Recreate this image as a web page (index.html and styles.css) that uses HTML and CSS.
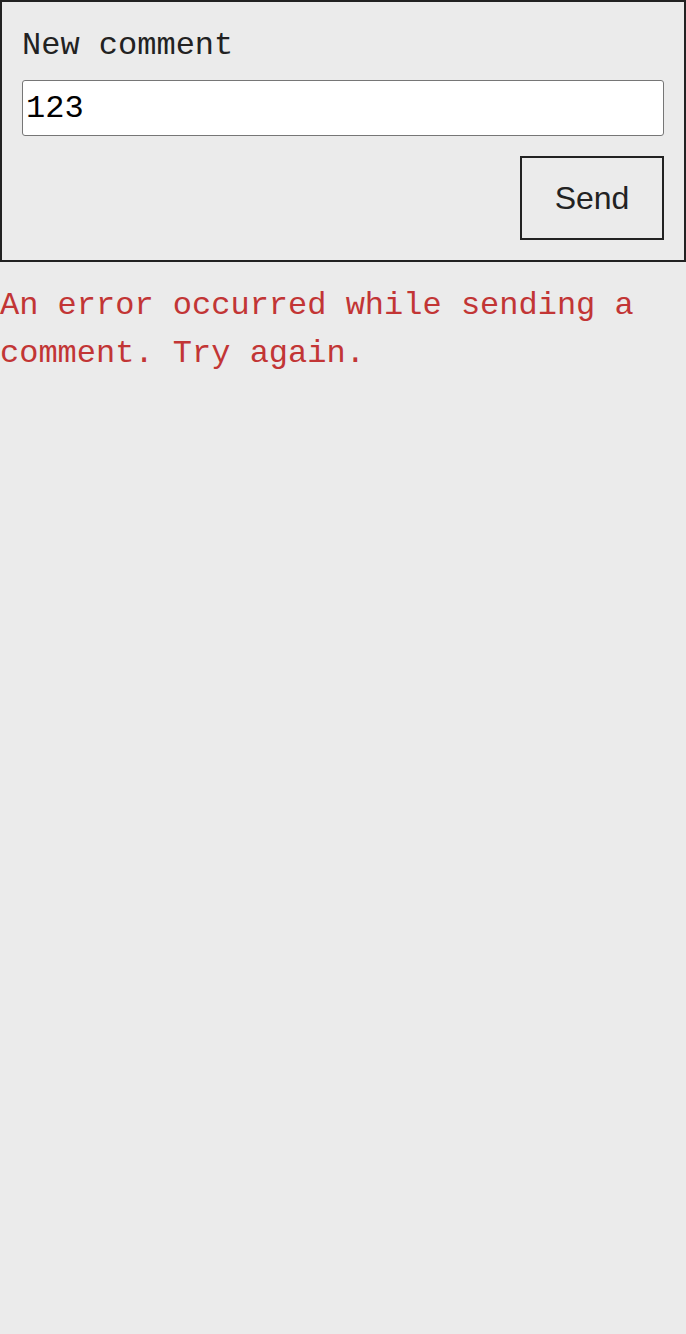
FILE: index.html
```html
<!DOCTYPE html>
<html lang="en">
<head>
<meta charset="utf-8">
<title>New comment</title>
<link rel="stylesheet" href="styles.css">
</head>
<body>
<form class="comment-form">
  <label class="comment-label" for="comment">New comment</label>
  <input class="comment-input" id="comment" type="text" value="123">
  <div class="actions">
    <button class="send-btn" type="button">Send</button>
  </div>
</form>
<p class="error">An error occurred while sending a comment. Try again.</p>
</body>
</html>
```

FILE: styles.css
```css
html, body {
  margin: 0;
  padding: 0;
  background: #ebebeb;
}
body {
  font-family: "Liberation Mono", "Cousine", monospace;
  font-size: 32px;
  line-height: 1.5;
  color: #222;
}
.comment-form {
  margin: 0;
  border: 2px solid #222;
  padding: 20px;
  display: flex;
  flex-direction: column;
}
.comment-label {
  display: block;
  line-height: 48px;
  margin-bottom: 10px;
}
.comment-input {
  box-sizing: border-box;
  height: 56px;
  width: 100%;
  margin: 0;
  padding: 0 3px;
  border: 1px solid #767676;
  border-radius: 3px;
  background: #fff;
  color: #000;
  font-family: "Liberation Mono", "Cousine", monospace;
  font-size: 32px;
}
.actions {
  display: flex;
  justify-content: flex-end;
  margin-top: 20px;
}
.send-btn {
  margin: 0;
  width: 144px;
  height: 84px;
  padding: 0;
  border: 2px solid #222;
  border-radius: 0;
  background: #ebebeb;
  color: #222;
  font-family: "Liberation Sans", Arial, sans-serif;
  font-size: 32px;
}
.error {
  margin: 20px 0 0;
  color: #c23535;
  line-height: 48px;
}
```
